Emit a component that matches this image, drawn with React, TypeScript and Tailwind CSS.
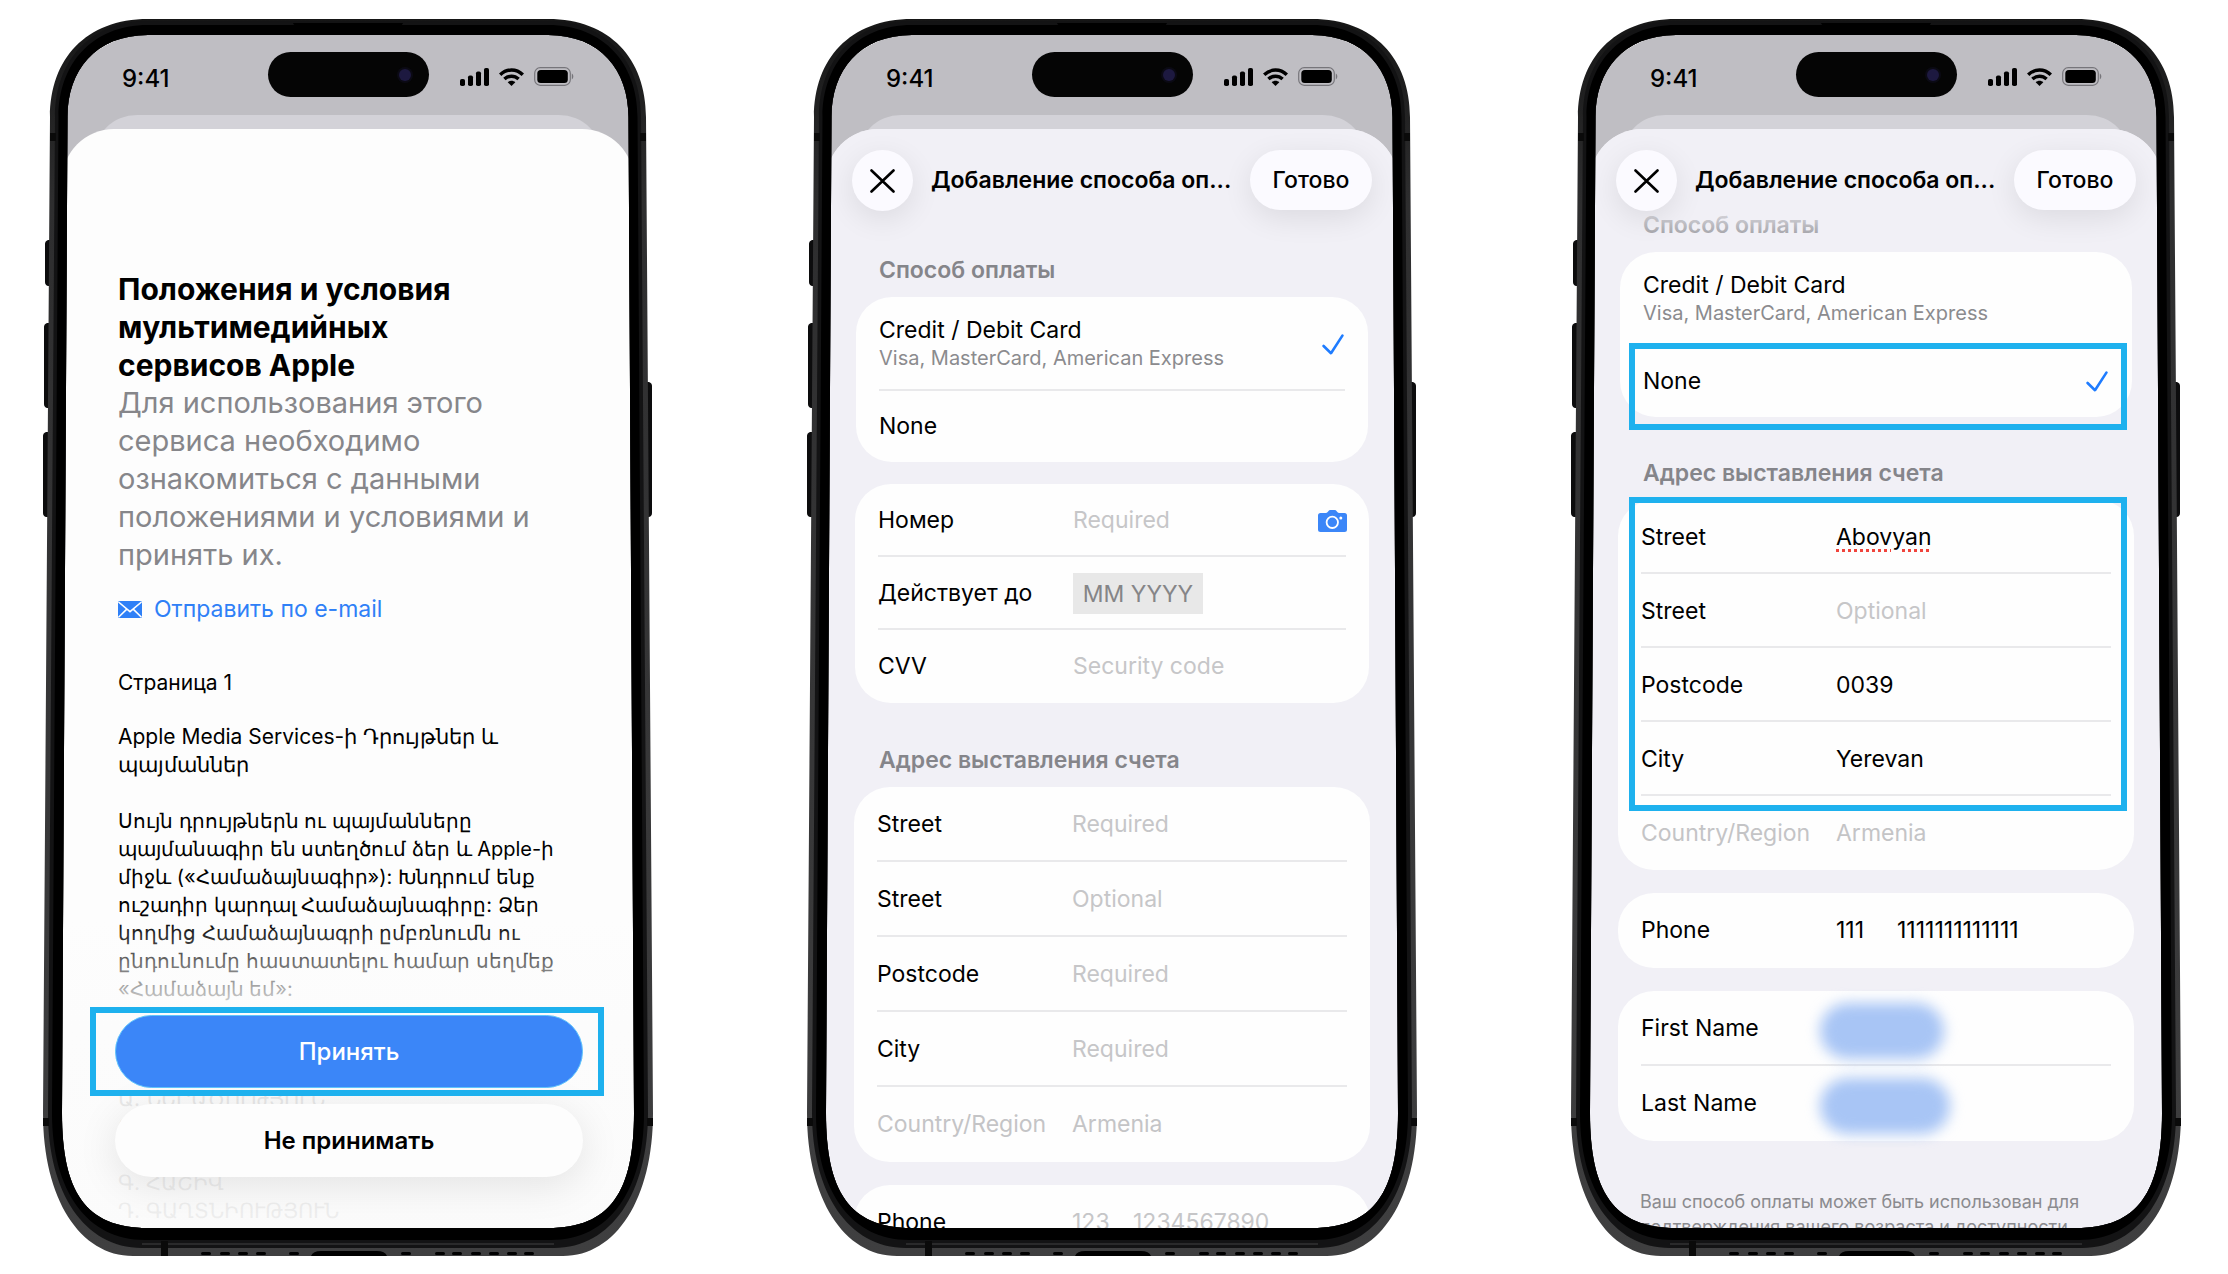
import React, { useState } from 'react';
import clsx from 'clsx';

type PaymentMethod = 'card' | 'none';

const speakerHoles = [160, 179, 197, 215, 248, 360, 394, 411, 430, 448, 466, 483];

function SignalIcon() {
  return (
    <svg width="29" height="18" viewBox="0 0 29 18" aria-hidden="true">
      <rect x="0" y="11" width="5" height="7" rx="1.8" />
      <rect x="8" y="7.500" width="5" height="10.500" rx="1.800" />
      <rect x="16" y="3.500" width="5" height="14.500" rx="1.800" />
      <rect x="24" y="0" width="5" height="18" rx="1.800" />
    </svg>
  );
}

function WifiIcon() {
  return (
    <svg width="25" height="18" viewBox="0 0 25 18" aria-hidden="true">
      <g fill="none" stroke="#000" strokeWidth="3.4">
        <path d="M1.200 6.800C7.600.400 17.400.400 23.800 6.800" />
        <path d="M5.400 11.100c4.100-3.900 10.100-3.900 14.200 0" />
      </g>
      <path d="M12.500 18 8.700 14.200c2.200-2 5.400-2 7.600 0z" />
    </svg>
  );
}

function BatteryIcon() {
  return (
    <svg width="40" height="19" viewBox="0 0 40 19" aria-hidden="true">
      <rect x=".7" y=".7" width="35.6" height="17.6" rx="5.5" fill="none" stroke="#76757a" strokeWidth="1.2" />
      <rect x="3.300" y="3" width="30.500" height="13" rx="3.500" />
      <path d="M37.8 6.6c2 .8 2 5 0 5.8z" fill="#76757a" />
    </svg>
  );
}

function CheckIcon() {
  return (
    <svg width="22" height="21" viewBox="0 0 22 21" fill="none" stroke="#1f7cff" strokeWidth="2.6" strokeLinecap="round" strokeLinejoin="round" aria-hidden="true">
      <path d="M1.6 12 9 19.200 20.400 1.600" />
    </svg>
  );
}

function CameraIcon() {
  return (
    <svg width="29" height="22" viewBox="0 0 29 22" aria-hidden="true">
      <path d="M2.5 3h5.200q1.200 0 2-1l.6-.8Q11 0 12.500 0h4Q18 0 18.700 1.200l.6.8q.8 1 2 1h5.200Q29 3 29 5.500v14Q29 22 26.500 22h-24Q0 22 0 19.500v-14Q0 3 2.500 3z" fill="#3b86f8" />
      <circle cx="14.300" cy="12.300" r="5.700" fill="none" stroke="#fff" strokeWidth="1.800" />
      <circle cx="22.800" cy="8" r="1.500" fill="#fff" />
    </svg>
  );
}

function MailIcon() {
  return (
    <svg width="24" height="17" viewBox="0 0 24 17" aria-hidden="true">
      <rect width="24" height="17" rx="1.5" fill="#2f80f7" />
      <path d="M.5 1 12 10.600 23.500 1M.5 16.300l8.300-8.200M23.500 16.300l-8.300-8.200" fill="none" stroke="#fff" strokeWidth="1.600" />
    </svg>
  );
}

function CloseIcon() {
  return (
    <svg width="25" height="24" viewBox="0 0 25 24" fill="none" stroke="#000" strokeWidth="2.600" strokeLinecap="round" aria-hidden="true">
      <path d="M1.500 1.500l22 21M23.500 1.500l-22 21" />
    </svg>
  );
}

/* Bezel of the device, drawn over the screen's edges */
function DeviceFrame() {
  const gradientId = React.useId();

  return (
    <svg className="absolute inset-0 z-20 size-full pointer-events-none" viewBox="0 0 614 1237" aria-hidden="true">
      <defs>
        <linearGradient id={gradientId} x1="0" y1="0" x2="0" y2="1">
          <stop offset="0" stopColor="#161616" />
          <stop offset=".15" stopColor="#2e2e2f" />
          <stop offset="1" stopColor="#3f3f40" />
        </linearGradient>
      </defs>
      <g fill="#0c0c0d">
        <path d="M9 221h-2q-3 1-3 4v38q0 3 3 4h2zM8 304h-2q-3 1-3 4v77q0 3 3 4h2zM7 413h-2q-3 1-3 4v77q0 3 3 4h2z" />
        <path d="M606 363h2q3 1 3 4v127q0 3-3 4h-2z" />
      </g>
      <path
        fillRule="evenodd"
        fill={`url(#${gradientId})`}
        d="M107 0H507C569 0 605 40 605 98L612 1094C612 1180 575 1237 522 1237H92C39 1237 2 1180 2 1094L9 98C9 40 45 0 107 0Z
           M107 16H507C560 16 587.500 52 587.500 98L593 1094C593 1172 570 1209 507 1209H107C44 1209 21 1172 21 1094L26.500 98C26.500 52 54 16 107 16Z"
      />
      <path
        fillRule="evenodd"
        fill="#131314"
        d="M107 2H507C565 2 600 42 600 98L607 1094C607 1173 571 1229 513 1229H101C43 1229 7 1173 7 1094L14 98C14 42 49 2 107 2Z
           M107 16H507C560 16 587.500 52 587.500 98L593 1094C593 1172 570 1209 507 1209H107C44 1209 21 1172 21 1094L26.500 98C26.500 52 54 16 107 16Z"
      />
      <path
        fillRule="evenodd"
        fill="#000"
        d="M107 6H507C563 6 596.500 45 596.500 98L603 1094C603 1172 568 1221 510 1221H104C46 1221 11 1172 11 1094L17.500 98C17.500 45 51 6 107 6Z
           M107 16H507C560 16 587.500 52 587.500 98L593 1094C593 1172 570 1209 507 1209H107C44 1209 21 1172 21 1094L26.500 98C26.500 52 54 16 107 16Z"
      />
      <path d="M101 1225H513" stroke="#333" strokeWidth="1.500" />
      <path d="M252 4h110q-1 3-4 3H256q-3 0-4-3z" fill="#000" />
      <path d="M9 114h6v8H9zM599 114h6v8h-6zM2 1099h6v8H2zM606 1099h6v8h-6zM120 1222h7v15h-7z" fill="#0a0a0a" />
      {speakerHoles.map(x => (
        <rect key={x} x={x} y="1233" width="10" height="3" rx="1.500" fill="#000" />
      ))}
      <path d="M270 1237q2-5 10-5h56q8 0 10 5z" fill="#000" />
    </svg>
  );
}

function StatusBar() {
  return (
    <div className="mt-[17px] mb-[18px] h-[45px] grid grid-cols-[1fr_auto_1fr] items-center">
      <span className="pl-[60px] pt-2 text-2xl leading-7 font-medium">9:41</span>
      <div className="w-[161px] h-[45px] rounded-full bg-[#050505] flex items-center justify-end pr-4">
        <span className="size-4 rounded-full bg-[#0b0a14] p-[2px]">
          <span className="block size-3 rounded-full bg-[#1d1940]" />
        </span>
      </div>
      <div className="pr-[60px] pt-1 flex items-center justify-end gap-[10px]">
        <SignalIcon />
        <WifiIcon />
        <BatteryIcon />
      </div>
    </div>
  );
}

function Phone({ sheetClass, children }: { sheetClass: string; children: React.ReactNode }) {
  return (
    <section className="relative w-[614px] h-[1237px] shrink-0 px-[21px] pt-4 pb-7">
      <div className="h-full flex flex-col overflow-hidden rounded-t-[84px] rounded-b-[76px] bg-[#bfbec3]">
        <StatusBar />
        <div className="mx-[31px] h-[54px] -mb-10 shrink-0 rounded-t-[44px] bg-[#d3d2d8]" />
        <div className={clsx('relative flex-1 min-h-0 overflow-hidden rounded-t-[52px]', sheetClass)}>
          {children}
        </div>
      </div>
      <DeviceFrame />
    </section>
  );
}

function Highlight({ className }: { className: string }) {
  return <div className={clsx('absolute border-6 border-[#1eb1ee] pointer-events-none', className)} />;
}

function SheetHeader() {
  return (
    <header className="absolute inset-x-0 top-0 z-10 h-[120px] px-[26px] pt-[21px] flex items-start bg-linear-to-b from-[#f1f0f6] from-60% to-[#f1f0f6]/0">
      <button aria-label="Закрыть" className="size-[61px] shrink-0 rounded-full bg-[#fbfaff] flex items-center justify-center shadow-[0_8px_30px_rgba(0,0,0,0.09)]">
        <CloseIcon />
      </button>
      <h2 className="flex-1 min-w-0 px-[18px] text-[23px] leading-[60px] font-semibold whitespace-nowrap">Добавление способа оп...</h2>
      <button className="w-[122px] h-[60px] shrink-0 rounded-full bg-[#fbfaff] text-[23px] font-medium shadow-[0_8px_30px_rgba(0,0,0,0.09)]">
        Готово
      </button>
    </header>
  );
}

function SectionTitle({ children, className }: { children: React.ReactNode; className?: string }) {
  return <h3 className={clsx('px-[53px] mb-[12px] text-[23px] leading-[29px] font-semibold text-[#85858a]', className)}>{children}</h3>;
}

function Card({ children, className }: { children: React.ReactNode; className?: string }) {
  return <div className={clsx('rounded-[36px] bg-[#fefefe]', className || 'mx-[28px]')}>{children}</div>;
}

function Divider() {
  return <div className="mx-[23px] -mt-[2px] h-[2px] bg-[#e9e9eb]" />;
}

interface FieldProps {
  id: string;
  label: string;
  placeholder?: string;
  value?: string;
  rowClass?: string;
  inputClass?: string;
  disabled?: boolean;
  last?: boolean;
  children?: React.ReactNode;
}

function Field({ id, label, placeholder, value, rowClass = 'h-[75px]', inputClass, disabled, last, children }: FieldProps) {
  return (
    <>
      <div className={clsx('relative pl-[23px] pr-[22px] flex items-center text-[23px]', rowClass)}>
        <label htmlFor={id} className={clsx('w-[195px] shrink-0', disabled && 'text-[#c4c4c6]')}>{label}</label>
        <input
          id={id}
          defaultValue={value}
          placeholder={placeholder}
          disabled={disabled}
          className={clsx('min-w-0 bg-transparent outline-none placeholder:text-[#c6c6c8] disabled:text-[#c4c4c6]', inputClass || 'flex-1')}
        />
        {children}
      </div>
      {!last && <Divider />}
    </>
  );
}

function PaymentMethods({ id, initial, highlightNone }: { id: string; initial: PaymentMethod; highlightNone?: boolean }) {
  const [method, setMethod] = useState<PaymentMethod>(initial);

  return (
    <Card className="mx-[30px]">
      <label className="relative h-[94px] pl-[23px] pr-6 flex items-center justify-between">
        <input type="radio" name={id} className="sr-only" checked={method === 'card'} onChange={() => setMethod('card')} />
        <span>
          <span className="block text-[23px] leading-7">Credit / Debit Card</span>
          <span className="block text-xl leading-7 text-[#8b8b8e]">Visa, MasterCard, American Express</span>
        </span>
        {method === 'card' && <CheckIcon />}
      </label>
      {!highlightNone && <Divider />}
      <label className="relative h-[71px] pl-[23px] pr-6 pb-px flex items-center justify-between text-[23px]">
        <input type="radio" name={id} className="sr-only" checked={method === 'none'} onChange={() => setMethod('none')} />
        None
        {method === 'none' && <CheckIcon />}
        {highlightNone && <Highlight className="left-[9px] right-[5px] -top-[3px] -bottom-[13px]" />}
      </label>
    </Card>
  );
}

function TermsScreen() {
  return (
    <Phone sheetClass="bg-[#fdfdfd]">
      <div className="pl-14 pr-10 pt-[141px] whitespace-nowrap">
        <h1 className="text-[30px] leading-[38px] font-bold">
          Положения и условия<br />мультимедийных<br />сервисов Apple
        </h1>
        <p className="text-[29px] leading-[38px] text-[#86868a]">
          Для использования этого<br />сервиса необходимо<br />ознакомиться с данными<br />положениями и условиями и<br />принять их.
        </p>
        <a href="#email" className="mt-[19px] flex items-center gap-3 text-[23px] leading-8 text-[#2f80f7]">
          <MailIcon />
          Отправить по e-mail
        </a>
        <div className="mt-11 text-xl leading-7">
          <p className="text-[21px]">Страница 1</p>
          <p className="mt-[26px] text-[21px] leading-7">Apple Media Services-ի Դրույթներ և<br />պայմաններ</p>
          <p className="mt-7">
            Սույն դրույթներն ու պայմանները<br />
            պայմանագիր են ստեղծում ձեր և Apple-ի<br />
            միջև («Համաձայնագիր»): Խնդրում ենք<br />
            ուշադիր կարդալ Համաձայնագիրը: Ձեր<br />
            կողմից Համաձայնագրի ըմբռնումն ու<br />
            ընդունումը հաստատելու համար սեղմեք<br />
            «Համաձայն եմ»:
          </p>
          <p className="mt-[82px] text-[21px] leading-7">
            Ա. ՆԵՐԱԾՈՒԹՅՈՒՆ<br />
            Բ.<br />
            <br />
            Գ. ՀԱՇԻՎ<br />
            Դ. ԳԱՂՏՆԻՈՒԹՅՈՒՆ
          </p>
        </div>
      </div>
      <div className="absolute inset-x-0 bottom-0 h-[310px] pt-[97px] pl-[53px] pr-[51px] bg-linear-to-b from-[#fdfdfd]/0 via-[#fcfcfc]/90 via-30% to-[#fbfbfb]/95">
        <div className="relative">
          <button className="w-full h-[73px] rounded-full bg-[#3b86f8] border border-[#5fc4fb] text-2xl font-medium text-white">Принять</button>
          <Highlight className="-left-[25px] -right-[21px] -top-[8px] -bottom-2" />
        </div>
        <button className="mt-4 w-full h-[73px] rounded-full bg-[#fdfdfd] text-2xl font-semibold shadow-[0_8px_40px_rgba(0,0,0,0.1)]">
          Не принимать
        </button>
      </div>
    </Phone>
  );
}

function CardScreen() {
  return (
    <Phone sheetClass="bg-[#f1f0f6]">
      <SheetHeader />
      <form>
        <SectionTitle className="pt-[127px]">Способ оплаты</SectionTitle>
        <PaymentMethods id="method-card" initial="card" />
        <Card className="mx-[29px] mt-[22px]">
          <Field id="number" label="Номер" placeholder="Required" rowClass="h-[73px]">
            <button type="button" aria-label="Сканировать карту"><CameraIcon /></button>
          </Field>
          <Field
            id="expires"
            label="Действует до"
            placeholder="MM YYYY"
            rowClass="h-[73px]"
            inputClass="w-[130px] h-[41px] bg-[#e8e8e8]! text-center placeholder:text-[#858587]!"
          />
          <Field id="cvv" label="CVV" placeholder="Security code" rowClass="h-[73px]" last />
        </Card>
        <SectionTitle className="mt-[43px]">Адрес выставления счета</SectionTitle>
        <Card>
          <Field id="street-1" label="Street" placeholder="Required" />
          <Field id="street-2" label="Street" placeholder="Optional" />
          <Field id="postcode" label="Postcode" placeholder="Required" />
          <Field id="city" label="City" placeholder="Required" />
          <Field id="country" label="Country/Region" value="Armenia" disabled last />
        </Card>
        <Card className="mx-[28px] mt-[23px]">
          <Field id="phone-code" label="Phone" placeholder="123" inputClass="w-[61px]" last>
            <input aria-label="Phone number" placeholder="1234567890" className="flex-1 min-w-0 outline-none placeholder:text-[#c6c6c8]" />
          </Field>
        </Card>
      </form>
    </Phone>
  );
}

function NoneScreen() {
  return (
    <Phone sheetClass="bg-[#f1f0f6]">
      <SheetHeader />
      <form>
        <SectionTitle className="pt-[82px]">Способ оплаты</SectionTitle>
        <PaymentMethods id="method-none" initial="none" highlightNone />
        <SectionTitle className="mt-[42px]">Адрес выставления счета</SectionTitle>
        <Card>
          <div className="relative">
            <Field
              id="billing-street-1"
              label="Street"
              value="Abovyan"
              rowClass="h-[74px]"
              inputClass="flex-1 underline decoration-dotted decoration-[#f0443c] decoration-3 underline-offset-4"
            />
            <Field id="billing-street-2" label="Street" placeholder="Optional" rowClass="h-[74px]" />
            <Field id="billing-postcode" label="Postcode" value="0039" rowClass="h-[74px]" />
            <Field id="billing-city" label="City" value="Yerevan" rowClass="h-[74px]" />
            <Highlight className="left-[11px] right-[7px] -top-[3px] -bottom-[15px]" />
          </div>
          <Field id="billing-country" label="Country/Region" value="Armenia" rowClass="h-[74px]" disabled last />
        </Card>
        <Card className="mx-[28px] mt-[23px]">
          <Field id="billing-phone-code" label="Phone" value="111" inputClass="w-[61px]" last>
            <input aria-label="Phone number" defaultValue="1111111111111" className="flex-1 min-w-0 outline-none" />
          </Field>
        </Card>
        <Card className="mx-[28px] mt-[23px]">
          <Field id="first-name" label="First Name">
            <span className="absolute left-[202px] top-3 w-[124px] h-[56px] rounded-full bg-[#a8c5f5] blur-[7px]" />
          </Field>
          <Field id="last-name" label="Last Name" last>
            <span className="absolute left-[202px] top-3 w-[130px] h-[56px] rounded-full bg-[#a8c5f5] blur-[7px]" />
          </Field>
        </Card>
        <p className="mt-12 pl-[50px] text-lg leading-[25px] text-[#8b8b8f] whitespace-nowrap">
          Ваш способ оплаты может быть использован для<br />подтверждения вашего возраста и доступности
        </p>
      </form>
    </Phone>
  );
}

export default function App() {
  return (
    <main className="min-h-screen bg-white pt-[19px] pl-[41px] pr-[45px] flex justify-between gap-10 text-black font-['Inter','Noto_Sans',sans-serif]">
      <TermsScreen />
      <CardScreen />
      <NoneScreen />
    </main>
  );
}
